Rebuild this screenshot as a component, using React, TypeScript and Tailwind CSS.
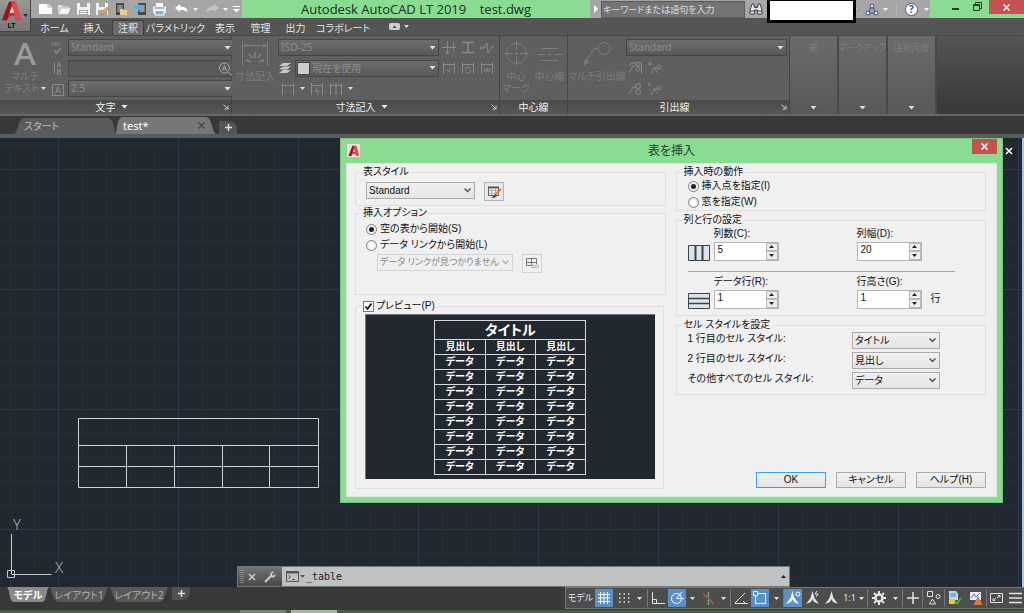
import clsx from "clsx";
import { useState, type ReactNode } from "react";

const uiFont = "font-['Noto_Sans','Noto_Sans_CJK_JP',sans-serif]";
const dialogFont = "font-['Liberation_Sans','Noto_Sans_CJK_JP',sans-serif]";

function Icon({
  w,
  h,
  children,
  className,
}: {
  w: number;
  h: number;
  children: ReactNode;
  className?: string;
}) {
  return (
    <svg
      width={w}
      height={h}
      viewBox={`0 0 ${w} ${h}`}
      fill="none"
      stroke="currentColor"
      aria-hidden="true"
      className={clsx("shrink-0", className)}
    >
      {children}
    </svg>
  );
}

function Caret({ className }: { className?: string }) {
  return (
    <Icon w={7} h={4} className={className}>
      <path d="M0.5 0h6L3.5 3.5z" fill="currentColor" stroke="none" />
    </Icon>
  );
}

function SmallCaret({ className }: { className?: string }) {
  return (
    <Icon w={5} h={3} className={className}>
      <path d="M0 0h5L2.5 3z" fill="currentColor" stroke="none" />
    </Icon>
  );
}

function LogoA({ size }: { size: number }) {
  return (
    <svg width={size} height={size} viewBox="0 0 24 24" aria-hidden="true">
      <path d="M1 22 9 1.500h7L22 22h-5.500l-1.500-5-6 1-2.500 4z" fill="#c8282c" />
      <path d="M16 1.500 22 22h-5.500L11 4z" fill="#e2494b" />
      <path d="M1 22 9 1.500 12 4 6.500 22z" fill="#9c1418" />
      <path d="m12 7 2.200 6.500-4.700 1z" fill="#f0e4e4" />
    </svg>
  );
}

/* ---------- Title bar ---------- */

const quickAccess: { label: string; icon: ReactNode }[] = [
  {
    label: "新規作成",
    icon: (
      <Icon w={15} h={14}>
        <path d="M1 2h9l4 3v7H1z" fill="#fff" stroke="none" />
        <path d="M10 2v3h4" stroke="#aaa" />
      </Icon>
    ),
  },
  {
    label: "開く",
    icon: (
      <Icon w={15} h={14}>
        <path d="M1 12V3h4l1 1.500h6V6H4z" fill="#ddd" stroke="none" />
        <path d="M1 12.500 4 6h10l-3 6.500z" fill="#f6f6f6" stroke="#999" strokeWidth=".5" />
      </Icon>
    ),
  },
  {
    label: "上書き保存",
    icon: (
      <Icon w={15} h={14}>
        <path d="M1 1h13v12H1z" fill="#f0f0f0" stroke="none" />
        <path d="M4 1h7v4H4zM3 8h9v5H3z" fill="#a8a8a8" stroke="none" />
        <path d="M4 9.500h7M4 11.500h7" stroke="#fff" />
      </Icon>
    ),
  },
  {
    label: "名前を付けて保存",
    icon: (
      <Icon w={15} h={14}>
        <path d="M1 1h12v12H1z" fill="#f0f0f0" stroke="none" />
        <path d="M4 1h6v4H4zM3 8h9v5H3z" fill="#a8a8a8" stroke="none" />
        <path d="m6 13 1-3 5-5 2 2-5 5z" fill="#f0a84a" stroke="#8a6a3a" strokeWidth=".5" />
      </Icon>
    ),
  },
  {
    label: "モバイルから開く",
    icon: (
      <Icon w={15} h={14}>
        <path d="M2 1h8v12H2z" fill="#4a4a4a" stroke="none" />
        <path d="M3.500 3h5v7h-5z" fill="#8a8a8a" stroke="none" />
        <path d="M6 13V7h3l1 1h3v5z" fill="#f3cf85" stroke="none" />
      </Icon>
    ),
  },
  {
    label: "モバイルに保存",
    icon: (
      <Icon w={15} h={14}>
        <path d="M5 1h8v12H5z" fill="#4a4a4a" stroke="none" />
        <path d="M6.500 3h5v7h-5z" fill="#9a9a9a" stroke="none" />
        <path d="M1 4h4V2l5 3.500L5 9V7H1z" fill="#5aa9e8" stroke="none" />
      </Icon>
    ),
  },
  {
    label: "印刷",
    icon: (
      <Icon w={15} h={14}>
        <path d="M4 1h7v4H4z" fill="#fff" stroke="none" />
        <path d="M1 4.500h13V11H1z" fill="#f0f0f0" stroke="none" />
        <path d="M3 6h9" stroke="#777" />
        <path d="M3 8.500h9V13H3z" fill="#7fb2de" stroke="#fff" />
      </Icon>
    ),
  },
];

function TitleBar() {
  return (
    <div className="flex h-[18px] bg-[#8bdc93]">
      <div className="flex w-[211px] shrink-0 items-center bg-[#a6a6a6] pl-[7px] text-white">
        <div className="flex items-center gap-1">
          {quickAccess.map((q) => (
            <button key={q.label} type="button" aria-label={q.label}>
              {q.icon}
            </button>
          ))}
        </div>
        <button type="button" aria-label="元に戻す" className="ml-2">
          <Icon w={14} h={10}>
            <path d="M0 4 5 0v2.500c5 0 7 2 8 6-2-2-4-2.500-8-2.500V8z" fill="#fff" stroke="none" />
          </Icon>
        </button>
        <SmallCaret className="ml-1" />
        <button type="button" aria-label="やり直し" className="ml-[7px]">
          <Icon w={14} h={10} className="text-[#c4c4c4]">
            <path d="M14 4 9 0v2.500c-5 0-7 2-8 6 2-2 4-2.500 8-2.500V8z" fill="currentColor" stroke="none" />
          </Icon>
        </button>
        <SmallCaret className="ml-1" />
        <button type="button" aria-label="クイック アクセスをカスタマイズ" className="ml-[5px]">
          <Icon w={7} h={8}>
            <path d="M0 1.500h7" stroke="#fff" />
            <path d="M0 4h7L3.500 7.500z" fill="#fff" stroke="none" />
          </Icon>
        </button>
      </div>

      <h1 className="grow text-center font-['Open_Sans',sans-serif] text-[13px] leading-[18px] whitespace-pre text-[#17301a]">
        {"Autodesk AutoCAD LT 2019    test.dwg"}
      </h1>

      <div className="flex w-[340px] shrink-0 items-center bg-[#a6a6a6] text-white">
        <button type="button" aria-label="検索を折りたたむ" className="flex w-[11px] justify-center">
          <Icon w={4} h={8}>
            <path d="M0 0 4 4 0 8z" fill="#fff" stroke="none" />
          </Icon>
        </button>
        <input
          type="text"
          aria-label="検索"
          placeholder="キーワードまたは語句を入力"
          className="h-[17px] w-[144px] border border-[#5a5a5a] bg-[#747474] px-px text-[9px] placeholder:text-[#dedede]"
        />
        <button type="button" aria-label="検索を実行" className="ml-1">
          <Icon w={14} h={14}>
            <path
              d="M3 2h2v3h4V2h2l2 6v4H8.500V8h-3v4H1V8z"
              fill="#e8e8ee"
              stroke="#3c4254"
            />
            <path d="M1 9h4.500M8.500 9H13M5.500 5.500h3" stroke="#3c4254" />
          </Icon>
        </button>
        <div className="relative ml-1 h-[18px] w-[89px] shrink-0">
          <div className="absolute inset-x-0 top-0 h-[23px] border-3 border-t-1 border-black bg-white" />
        </div>
        <SmallCaret className="-ml-1" />
        <button type="button" aria-label="Autodesk App Store" className="ml-2">
          <Icon w={14} h={13}>
            <path d="M7 3 3 10h8z" stroke="#3c4a86" />
            <g fill="#dfe4f6" stroke="#3c4a86">
              <circle cx="7" cy="3" r="2" />
              <circle cx="3" cy="10" r="2" />
              <circle cx="11" cy="10" r="2" />
            </g>
          </Icon>
        </button>
        <SmallCaret className="ml-1" />
        <span className="mx-2 h-3 w-px bg-[#b8b8b8]" />
        <button
          type="button"
          aria-label="ヘルプ"
          className="flex size-[13px] items-center justify-center rounded-full border border-[#55596a] bg-white text-[10px] font-bold text-[#2458b0]"
        >
          ?
        </button>
        <SmallCaret className="ml-[6px]" />
      </div>

      <div className="flex w-[94px] shrink-0 items-start justify-end text-[#1d3a20]">
        <button type="button" aria-label="最小化" className="mt-[8px] mr-[14px] h-[2px] w-[7px] bg-[#1d3a20]" />
        <button type="button" aria-label="元に戻す (縮小)" className="mt-[2px] mr-[7px]">
          <Icon w={9} h={9}>
            <path d="M2.500 2.500v-2h6v6h-2" />
            <path d="M.5 2.500h6v6h-6zM.5 3.500h6" />
          </Icon>
        </button>
        <CloseButton className="h-[14px] w-[35px]" />
      </div>
    </div>
  );
}

function CloseButton({ className }: { className?: string }) {
  return (
    <button
      type="button"
      aria-label="閉じる"
      className={clsx("flex items-center justify-center bg-[#c75050] text-white", className)}
    >
      <Icon w={7} h={7}>
        <path d="m.5.5 6 6m0-6-6 6" strokeWidth="1.500" />
      </Icon>
    </button>
  );
}

/* ---------- Ribbon ---------- */

const ribbonTabs = [
  { label: "ホーム", width: "w-[41px]" },
  { label: "挿入", width: "w-[37px]" },
  { label: "注釈", width: "w-[32px]", active: true },
  { label: "パラメトリック", width: "w-[63px]" },
  { label: "表示", width: "w-[36px]" },
  { label: "管理", width: "w-[35px]" },
  { label: "出力", width: "w-[35px]" },
  { label: "コラボレート", width: "w-[60px]" },
];

function RibbonTabs() {
  return (
    <nav className="flex h-[17px] items-end bg-[#555] pl-[3px]">
      {ribbonTabs.map((t) => (
        <button
          key={t.label}
          type="button"
          className={clsx(
            "h-[15px] shrink-0 border border-b-0 text-[10px] leading-[13px] whitespace-nowrap text-[#e4e4e4]",
            t.width,
            t.active ? "border-[#3f3f3f] bg-[#6b6b6b]" : "border-transparent",
          )}
        >
          {t.label}
        </button>
      ))}
      <button type="button" aria-label="リボンを最小化" className="ml-4 flex items-center gap-1 self-center text-[#ddd]">
        <Icon w={11} h={7}>
          <rect width="11" height="7" rx="2" fill="#d0d0d0" stroke="none" />
          <path d="M3.500 5h4l-2-2.500z" fill="#444" stroke="none" />
        </Icon>
        <SmallCaret />
      </button>
    </nav>
  );
}

function RibbonSelect({
  label,
  value,
  swatch,
}: {
  label: string;
  value: string;
  swatch?: boolean;
}) {
  return (
    <div className="flex h-[17px] min-w-0 grow items-center border border-[#474747] bg-linear-to-b from-[#6d6d6d] to-[#595959] pr-[2px]">
      {swatch && <span className="ml-px size-[13px] shrink-0 border border-[#444] bg-[#ccc]" />}
      <select
        aria-label={label}
        className="h-full min-w-0 grow appearance-none bg-transparent px-[2px] text-[10px] text-[#8c8c8c] outline-none"
      >
        <option>{value}</option>
      </select>
      <Caret className="text-[#e2e2e2]" />
    </div>
  );
}

function Panel({
  title,
  width,
  caret,
  launcher,
  children,
}: {
  title: string;
  width: string;
  caret?: boolean;
  launcher?: boolean;
  children: ReactNode;
}) {
  return (
    <section className={clsx("flex shrink-0 flex-col border-r border-[#454545]", width)}>
      <div className="flex grow bg-[#5f5f5f] text-[#8a8a8a]">{children}</div>
      <div className="flex h-[14px] items-center justify-center bg-linear-to-b from-[#4a4a4a] to-[#575757] text-[#f0f0f0]">
        <h2 className="flex grow items-center justify-center gap-[5px] text-[10px] leading-[14px]">
          {title}
          {caret && <Caret />}
        </h2>
        {launcher && (
          <Icon w={6} h={6} className="mr-[2px] text-[#ccc]">
            <path d="M.5.5 4 4M5 1.500V5H1.500" />
          </Icon>
        )}
      </div>
    </section>
  );
}

function BigButton({
  icon,
  lines,
  width,
  menu,
}: {
  icon: ReactNode;
  lines: string[];
  width: string;
  menu?: boolean;
}) {
  return (
    <button
      type="button"
      className={clsx("flex shrink-0 flex-col items-center pt-1 text-[10px] leading-[12px] whitespace-nowrap text-[#7d7d7d]", width)}
    >
      <span className="mb-[3px] flex h-[27px] items-center">{icon}</span>
      {lines.map((l, i) => (
        <span key={l} className="flex items-center gap-[2px]">
          {l}
          {menu && i === lines.length - 1 && <SmallCaret className="text-[#ddd]" />}
        </span>
      ))}
    </button>
  );
}

function DimIcon({ children }: { children?: ReactNode }) {
  return (
    <Icon w={14} h={13}>
      <path d="M1.500 1v12M12.500 1v12M1.500 3.500h11" />
      {children}
    </Icon>
  );
}

const leaderMini = "M1 12l4-7h3";

function Ribbon() {
  return (
    <div className="flex h-[79px] border-t border-[#484848] bg-linear-to-b from-[#555] to-[#383838]">
      <Panel title="文字" width="w-[232px]" caret launcher>
        <BigButton
          width="w-[50px]"
          lines={["マルチ", "テキスト"]}
          menu
          icon={
            <Icon w={22} h={24}>
              <path
                d="M0 23 9 1h4l9 22h-4l-2.500-6h-9L4 23zM7.500 14h7L11 5z"
                fill="#999"
                stroke="none"
              />
            </Icon>
          }
        />
        <div className="flex grow flex-col justify-between py-[3px] pr-[2px]">
          <div className="flex items-center gap-1">
            <Icon w={14} h={14}>
              <text x="1" y="5" fontSize="5" fill="currentColor" stroke="none">ABC</text>
              <path d="m4 9 2.500 3L11 7" strokeWidth="1.500" />
            </Icon>
            <RibbonSelect label="文字スタイル" value="Standard" />
          </div>
          <div className="flex items-center gap-1">
            <Icon w={14} h={14}>
              <path d="M4.500 1v12M7 6.500l2-5 2 5M8 5h2" />
              <path d="M7.500 8.500h2.500v2H7.500zM7.500 10.500h3v2.500h-3z" />
            </Icon>
            <div className="flex h-[17px] min-w-0 grow items-center border border-[#474747] bg-[#5a5a5a]">
              <input type="text" aria-label="文字列を検索" className="min-w-0 grow bg-transparent text-[10px]" />
              <Icon w={16} h={15} className="text-[#aaa]">
                <circle cx="7.500" cy="7" r="5" />
                <path d="m11 11 4 3.500M5.500 9.500l2-5 2 5M6 8h3" />
              </Icon>
            </div>
          </div>
          <div className="flex items-center gap-1">
            <Icon w={14} h={14}>
              <path d="M2.500 2.500h11v11h-11z" />
              <path d="m5.500 11.500 2.500-7 2.500 7M6.500 9.500h3" />
            </Icon>
            <RibbonSelect label="文字の高さ" value="2.5" />
          </div>
        </div>
      </Panel>

      <Panel title="寸法記入" width="w-[268px]" caret launcher>
        <BigButton
          width="w-[46px]"
          lines={["寸法記入"]}
          icon={
            <Icon w={28} h={27}>
              <path d="M1.500 1v25M26.500 1v25M2 5.500h24" />
              <path d="m2 5.500 4-2v4zM26 5.500l-4-2v4z" fill="currentColor" stroke="none" />
              <path d="M14 12v6M8 14l3 4M20 14l-3 4M5 20l5 2M23 20l-5 2" strokeWidth="2" />
            </Icon>
          }
        />
        <div className="flex grow flex-col justify-between py-[3px]">
          <div className="flex">
            <RibbonSelect label="寸法スタイル" value="ISO-25" />
          </div>
          <div className="flex items-center gap-[3px]">
            <Icon w={14} h={13} className="text-[#c8c8c8]">
              <path
                d="M5 1h8l-4 3H1zM5 4.500h8l-4 3H1zM5 8h8l-4 3H1z"
                fill="currentColor"
                stroke="none"
              />
            </Icon>
            <RibbonSelect label="寸法画層" value="現在を使用" swatch />
          </div>
          <div className="flex h-[17px] items-center gap-[5px] pl-[3px]">
            <DimIcon />
            <SmallCaret className="text-[#ddd]" />
            <DimIcon>
              <path d="m8 5-3 4h4l-2 4" />
            </DimIcon>
            <DimIcon>
              <path d="M7 1v12" />
            </DimIcon>
            <SmallCaret className="text-[#ddd]" />
          </div>
        </div>
        <div className="grid w-[60px] shrink-0 grid-cols-3 content-start gap-y-[7px] pt-[5px] pl-[3px]">
          <Icon w={14} h={13}>
            <path d="M0 6.500h14M5.500 0v13M11.500 2v9M3 10l2.500 3L8 10" />
          </Icon>
          <Icon w={14} h={13}>
            <path d="M1 1.500h12M1 11.500h12M4 1.500h6M7 2v9" strokeWidth="1.500" />
          </Icon>
          <Icon w={14} h={13}>
            <path d="M1 7h3l3-5 1 10 4-6h2M1 5v4" />
          </Icon>
          <DimIcon>
            <path d="m4.500 8 2 2.500 3-4" />
          </DimIcon>
          <DimIcon>
            <path d="M4.500 9a2.500 2.500 0 0 1 5-1M9.500 9a2.500 2.500 0 0 1-5 1.500" />
          </DimIcon>
          <DimIcon>
            <circle cx="5.500" cy="9" r="1.500" />
            <circle cx="8.500" cy="9" r="1.500" />
          </DimIcon>
        </div>
      </Panel>

      <Panel title="中心線" width="w-[68px]">
        <BigButton
          width="w-[32px]"
          lines={["中心", "マーク"]}
          icon={
            <Icon w={25} h={25}>
              <circle cx="12.500" cy="12.500" r="10" />
              <path d="M12.500 0v9M12.500 16v9M0 12.500h9M16 12.500h9M12.500 11v3M11 12.500h3" />
            </Icon>
          }
        />
        <BigButton
          width="w-[35px]"
          lines={["中心線"]}
          icon={
            <Icon w={26} h={16}>
              <path d="M4 2.500h17M0 8.500h8M11 8.500h4M18 8.500h8M4 14.500h17" />
            </Icon>
          }
        />
      </Panel>

      <Panel title="引出線" width="w-[222px]" launcher>
        <BigButton
          width="w-[58px]"
          lines={["マルチ引出線"]}
          icon={
            <Icon w={28} h={26}>
              <circle cx="21" cy="7.500" r="6" />
              <path d="M15 7.500h-4L3 21" />
              <path d="m1 25 1-7 4 3z" fill="currentColor" stroke="none" />
            </Icon>
          }
        />
        <div className="flex grow flex-col justify-between py-[3px] pr-[2px]">
          <div className="flex">
            <RibbonSelect label="引出線スタイル" value="Standard" />
          </div>
          <div className="flex h-[17px] items-center gap-[6px] pl-[2px]">
            <Icon w={14} h={14}>
              <path d={leaderMini} />
              <path d="M1 5l3-3h4M13.500 1v12" />
              <circle cx="10" cy="3" r="2" />
              <circle cx="10" cy="8" r="2" />
            </Icon>
            <Icon w={14} h={14}>
              <path d="M0 3h4M2 1v4M3 13l3-6h4M6 7l4 5" />
              <circle cx="11" cy="6" r="2" />
            </Icon>
          </div>
          <div className="flex h-[17px] items-center gap-[6px] pl-[2px]">
            <Icon w={14} h={14}>
              <path d={leaderMini} />
              <circle cx="10" cy="4" r="2.500" />
              <circle cx="10" cy="10" r="2.500" />
            </Icon>
            <Icon w={14} h={14}>
              <path d="m0 1 3 3m0-3L0 4M3 13l3-6h4M6 7l4 5" />
              <circle cx="11" cy="6" r="2" />
            </Icon>
          </div>
        </div>
      </Panel>

      {["表", "マークアップ", "注釈尺度"].map((label) => (
        <button
          key={label}
          type="button"
          className="flex w-[49px] shrink-0 flex-col items-center justify-between overflow-hidden border-r-2 border-[#484848] bg-linear-to-b from-[#6b6b6b] to-[#585858] pt-[5px] pb-[4px] text-[9px] leading-[14px] whitespace-nowrap text-[#7e7e7e]"
        >
          {label}
          <Caret className="text-[#ddd]" />
        </button>
      ))}
    </div>
  );
}

/* ---------- File tabs ---------- */

function FileTabs() {
  return (
    <div className="flex h-[24px] items-end border-t-2 border-b-4 border-t-[#666] border-b-[#5b5b5b] bg-[#383838] pl-[14px] text-[10px]">
      <button type="button" className="relative h-[16px] w-[101px] pl-[10px] text-left leading-[16px] text-[#bdbdbd]">
        <svg className="absolute inset-0 size-full" viewBox="0 0 101 16" preserveAspectRatio="none" aria-hidden="true">
          <path d="M0 16C5 14 3 0 11 0h82c6 0 6 4 8 16z" fill="#5b5b5b" />
        </svg>
        <span className="relative">スタート</span>
      </button>
      <div className="relative flex h-[17px] w-[101px] items-center pr-[11px] pl-[8px] text-white">
        <svg className="absolute inset-0 size-full" viewBox="0 0 101 17" preserveAspectRatio="none" aria-hidden="true">
          <path d="M0 17C3 14 1 0 8 0h82c8 0 6 14 11 17z" fill="#777" />
        </svg>
        <button type="button" className="relative grow text-left text-[11px] leading-[16px]">
          test*
        </button>
        <button type="button" aria-label="test を閉じる" className="relative text-[#4a4a4a]">
          <Icon w={7} h={7}>
            <path d="m.5.5 6 6m0-6-6 6" strokeWidth="1.500" />
          </Icon>
        </button>
      </div>
      <button
        type="button"
        aria-label="新しい図面"
        className="ml-[3px] flex h-[13px] w-[18px] items-center justify-center rounded-tr-lg bg-[#545454] text-[#ddd]"
      >
        <Icon w={7} h={7}>
          <path d="M3.500 0v7M0 3.500h7" strokeWidth="1.500" />
        </Icon>
      </button>
    </div>
  );
}

/* ---------- Drawing area ---------- */

function Drawing() {
  return (
    <svg className="absolute inset-0 size-full" aria-label="図面">
      <defs>
        <pattern id="minor" x="10" y="7" width="24" height="24" patternUnits="userSpaceOnUse">
          <path d="M.5 0v24M0 .5h24" stroke="#262e38" fill="none" />
        </pattern>
        <pattern id="major" x="58" y="31" width="120" height="120" patternUnits="userSpaceOnUse">
          <path d="M.5 0v120M0 .5h120" stroke="#2e3746" fill="none" />
        </pattern>
      </defs>
      <rect width="100%" height="100%" fill="url(#minor)" />
      <rect width="100%" height="100%" fill="url(#major)" />
      <path
        d="M78.500 280.500h240v69h-240zM78.500 307.500h240M78.500 328.500h240M126.500 307v43M174.500 307v43M222.500 307v43M269.500 307v43"
        stroke="#d0d2d4"
        fill="none"
      />
      {/* UCS icon */}
      <path d="M7.500 432.500h7v7h-7zM11.500 436.500h40M11.500 436v-40" stroke="#c6c9cc" fill="none" />
      <g fill="#b9bdc2" className="font-['Open_Sans',sans-serif] font-light" fontSize="15">
        <text x="13" y="392">Y</text>
        <text x="55" y="435">X</text>
      </g>
    </svg>
  );
}

function CommandLine() {
  return (
    <div className="absolute right-[232px] bottom-0 left-[237px] flex h-[21px] border border-[#777] bg-[#c0c1c3]">
      <div className="flex w-[44px] shrink-0 items-center gap-2 bg-linear-to-b from-[#757575] to-[#484848] pl-[2px] text-[#ccc]">
        <Icon w={4} h={14} className="text-[#aaa]">
          <path d="M1 0v14M3 0v14" strokeDasharray="1 1" />
        </Icon>
        <button type="button" aria-label="コマンド ラインを閉じる" className="-ml-1">
          <Icon w={8} h={8}>
            <path d="m1 1 6 6m0-6-6 6" strokeWidth="1.500" />
          </Icon>
        </button>
        <button type="button" aria-label="カスタマイズ">
          <Icon w={12} h={12}>
            <path d="m1 11 6-6" strokeWidth="2" />
            <path d="M10 1 8 3v1.500h1.500L11.500 3c.5 2-1 4-3 3.500S5.500 3 7 1.500 9 .5 10 1" fill="currentColor" stroke="none" />
          </Icon>
        </button>
      </div>
      <div className="flex grow items-center pr-[3px] pl-1 text-[#555]">
        <Icon w={13} h={11}>
          <path d="M.5.5h12v10H.5z" />
          <path d="M0 1.500h13" strokeWidth="2" />
          <path d="m2.500 4.500 2 1.500-2 1.500M6 8.500h3" />
        </Icon>
        <SmallCaret className="mx-px" />
        <input
          type="text"
          aria-label="コマンド"
          defaultValue="_table"
          className="min-w-0 grow bg-transparent font-['DejaVu_Sans_Mono',monospace] text-[10px] text-[#222] outline-none"
        />
        <Icon w={5} h={3} className="text-[#222]">
          <path d="M0 3h5L2.500 0z" fill="currentColor" stroke="none" />
        </Icon>
      </div>
    </div>
  );
}

/* ---------- Insert table dialog ---------- */

function Group({
  legend,
  className,
  children,
}: {
  legend: ReactNode;
  className?: string;
  children: ReactNode;
}) {
  return (
    <fieldset className={clsx("min-w-0 border border-[#dfdfdf]", className)}>
      <legend className="ml-[5px] px-[2px] leading-[14px]">{legend}</legend>
      {children}
    </fieldset>
  );
}

function Dropdown({
  label,
  id,
  options,
  width,
  disabled,
}: {
  label?: string;
  id?: string;
  options: string[];
  width: string;
  disabled?: boolean;
}) {
  return (
    <div
      className={clsx(
        "flex h-[17px] shrink-0 items-center border pr-[3px]",
        width,
        disabled
          ? "border-[#d4d4d4] bg-[#efefef] text-[9px] text-[#868686]"
          : "border-[#acacac] bg-linear-to-b from-[#f0f0f0] to-[#e5e5e5] text-[#111]",
      )}
    >
      <select
        id={id}
        aria-label={label}
        disabled={disabled}
        className="h-full min-w-0 grow appearance-none bg-transparent pl-[2px] outline-none"
      >
        {options.map((o) => (
          <option key={o}>{o}</option>
        ))}
      </select>
      <Icon w={7} h={5} className={disabled ? "text-[#b5b5b5]" : "text-[#555]"}>
        <path d="m.5.5 3 3 3-3" strokeWidth="1.500" />
      </Icon>
    </div>
  );
}

function Radio({
  name,
  label,
  checked,
  onChange,
}: {
  name: string;
  label: string;
  checked: boolean;
  onChange: () => void;
}) {
  return (
    <label className="flex w-fit items-center gap-[3px] leading-[14px]">
      <input
        type="radio"
        name={name}
        checked={checked}
        onChange={onChange}
        className="size-[11px] appearance-none rounded-full border border-[#808080] bg-white bg-clip-content p-[2px] checked:bg-[#222]"
      />
      {label}
    </label>
  );
}

function Spinner({ id, initial }: { id: string; initial: number }) {
  const [value, setValue] = useState(String(initial));
  const step = (delta: number) => setValue((v) => String(Math.max(1, (Number(v) || 0) + delta)));

  return (
    <div className="flex h-[19px] w-[65px] border border-[#b4b4b4] bg-white">
      <input
        id={id}
        type="text"
        value={value}
        onChange={(e) => setValue(e.target.value)}
        className="h-[14px] min-w-0 grow bg-transparent pl-[3px] outline-none"
      />
      <div className="flex w-[12px] shrink-0 flex-col">
        <button
          type="button"
          aria-label="増やす"
          onClick={() => step(1)}
          className="flex grow items-center justify-center border border-[#b8b8b8] bg-[#eee]"
        >
          <Icon w={5} h={3}>
            <path d="M0 3h5L2.500 0z" fill="#222" stroke="none" />
          </Icon>
        </button>
        <button
          type="button"
          aria-label="減らす"
          onClick={() => step(-1)}
          className="flex grow items-center justify-center border border-[#b8b8b8] bg-[#eee]"
        >
          <SmallCaret className="text-[#222]" />
        </button>
      </div>
    </div>
  );
}

function PreviewTable() {
  return (
    <table className="w-[152px] border-collapse text-[10px] leading-[14px] font-bold text-white">
      <thead>
        <tr>
          <th colSpan={3} className="h-[19px] border border-[#d8d8d8] p-0 text-[14px] leading-[18px]">
            タイトル
          </th>
        </tr>
        <tr>
          {[0, 1, 2].map((c) => (
            <th key={c} className="h-[15px] w-1/3 border border-[#d8d8d8] p-0">
              見出し
            </th>
          ))}
        </tr>
      </thead>
      <tbody>
        {Array.from({ length: 8 }, (_, r) => (
          <tr key={r}>
            {[0, 1, 2].map((c) => (
              <td key={c} className="h-[15px] border border-[#d8d8d8] p-0 text-center">
                データ
              </td>
            ))}
          </tr>
        ))}
      </tbody>
    </table>
  );
}

const cellStyles = [
  { id: "style-first", label: "1 行目のセル スタイル:", value: "タイトル" },
  { id: "style-second", label: "2 行目のセル スタイル:", value: "見出し" },
  { id: "style-rest", label: "その他すべてのセル スタイル:", value: "データ" },
];

function InsertTableDialog() {
  const [source, setSource] = useState("empty");
  const [placement, setPlacement] = useState("point");
  const [preview, setPreview] = useState(true);

  return (
    <div
      role="dialog"
      aria-labelledby="dialog-title"
      className="absolute top-0 right-[19px] left-[340px] border border-[#76c47e] bg-[#8bdc93] px-[5px] pb-[5px]"
    >
      <div className="flex h-[24px] items-start">
        <span className="mt-[5px] ml-px flex size-[13px] items-center justify-center bg-[#f5dede]">
          <LogoA size={12} />
        </span>
        <h2 id="dialog-title" className="grow pl-[11px] text-center text-[12px] leading-[24px] text-[#26402a]">
          表を挿入
        </h2>
        <CloseButton className="h-[15px] w-[25px]" />
      </div>

      <div
        className={clsx(
          "flex gap-[10px] border border-[#d9ead9] bg-[#f0f0f0] pt-px pr-[10px] pb-[7px] pl-[8px] text-[10px] text-[#111]",
          dialogFont,
        )}
      >
        <div className="flex min-w-0 flex-1 flex-col">
          <Group legend="表スタイル" className="pb-1">
            <div className="flex items-start gap-[9px] pt-[3px] pl-[10px]">
              <Dropdown label="表スタイル" options={["Standard"]} width="w-[109px]" />
              <button
                type="button"
                aria-label="表スタイル管理を起動"
                className="flex h-[19px] w-[20px] items-center justify-center border border-[#b4b4b4] bg-[#e8e8e8]"
              >
                <Icon w={15} h={14}>
                  <path d="M1.500 2.500h10v8h-10z" fill="#fff" stroke="#555" />
                  <path d="M1 2.500h11" stroke="#555" strokeWidth="2" />
                  <path d="M1.500 5.500h10M1.500 8.500h10M4.500 3v7M8.500 3v7" stroke="#aaa" />
                  <path d="M14 4 9 9" stroke="#d88a3a" strokeWidth="2" />
                  <path d="M4 13c2 0 2-4 5-4 2 2 0 4-5 4" fill="#7a3f1a" stroke="none" />
                </Icon>
              </button>
            </div>
          </Group>

          <Group legend="挿入オプション" className="pb-[21px]">
            <div className="flex flex-col gap-[2px] pt-[2px] pl-[10px]">
              <Radio
                name="source"
                label="空の表から開始(S)"
                checked={source === "empty"}
                onChange={() => setSource("empty")}
              />
              <Radio
                name="source"
                label="データ リンクから開始(L)"
                checked={source === "link"}
                onChange={() => setSource("link")}
              />
              <div className="flex items-start gap-[9px] pl-[11px]">
                <Dropdown
                  label="データ リンク"
                  options={["データ リンクが見つかりません"]}
                  width="w-[136px]"
                  disabled
                />
                <button
                  type="button"
                  aria-label="データ リンク管理を起動"
                  disabled
                  className="flex h-[19px] w-[20px] items-center justify-center border border-[#d4d4d4] text-[#777]"
                >
                  <Icon w={13} h={11}>
                    <path d="M5 7.500H.5v-7h10V6M.5 4.500h10M5.500.5v7" />
                    <circle cx="7" cy="8.500" r="1.500" stroke="#aaa" />
                    <circle cx="11" cy="8.500" r="1.500" stroke="#aaa" />
                  </Icon>
                </button>
              </div>
            </div>
          </Group>

          <Group
            className="mt-[4px] mr-[2px] pb-[9px]"
            legend={
              <label className="flex items-center gap-[2px]">
                <span className="relative flex size-[11px]">
                  <input
                    type="checkbox"
                    checked={preview}
                    onChange={(e) => setPreview(e.target.checked)}
                    className="peer size-[11px] appearance-none border border-[#777] bg-white"
                  />
                  <Icon w={11} h={11} className="pointer-events-none absolute inset-0 hidden text-black peer-checked:block">
                    <path d="m2.500 5.500 2 2.500 4-5.500" strokeWidth="1.500" />
                  </Icon>
                </span>
                プレビュー(P)
              </label>
            }
          >
            <div className="mt-px mr-[8px] ml-[9px] flex h-[165px] items-center justify-center border-t border-l border-[#777] bg-[#212830]">
              {preview && <PreviewTable />}
            </div>
          </Group>
        </div>

        <div className="flex min-w-0 flex-1 flex-col gap-[2px]">
          <Group legend="挿入時の動作" className="pb-px">
            <div className="flex flex-col gap-[2px] pl-[11px]">
              <Radio
                name="placement"
                label="挿入点を指定(I)"
                checked={placement === "point"}
                onChange={() => setPlacement("point")}
              />
              <Radio
                name="placement"
                label="窓を指定(W)"
                checked={placement === "window"}
                onChange={() => setPlacement("window")}
              />
            </div>
          </Group>

          <Group legend="列と行の設定" className="pb-[6px]">
            <div className="grid grid-cols-[22px_139px_65px_auto] items-center justify-start gap-x-[4px] pl-[11px] leading-[14px]">
              <label htmlFor="columns" className="col-start-2">
                列数(C):
              </label>
              <label htmlFor="column-width" className="whitespace-nowrap">
                列幅(D):
              </label>
              <Icon w={22} h={16} className="col-start-1 mt-1">
                <path d="M.5.500h21v15H.5z" fill="#dde3ea" stroke="#39434f" />
                <path d="M7.500 0v16M14.500 0v16" stroke="#39434f" strokeWidth="2" />
              </Icon>
              <Spinner id="columns" initial={5} />
              <Spinner id="column-width" initial={20} />
            </div>
            <hr className="mt-[10px] mr-[30px] mb-[3px] ml-[11px] border-t border-[#a5a5a5]" />
            <div className="grid grid-cols-[22px_139px_65px_auto] items-center justify-start gap-x-[4px] pl-[11px] leading-[14px]">
              <label htmlFor="rows" className="col-start-2">
                データ行(R):
              </label>
              <label htmlFor="row-height" className="whitespace-nowrap">
                行高さ(G):
              </label>
              <Icon w={22} h={16} className="col-start-1 mt-1">
                <path d="M.5.500h21v15H.5z" fill="#dde3ea" stroke="#39434f" />
                <path d="M0 5.500h22M0 10.500h22" stroke="#39434f" strokeWidth="1.500" />
              </Icon>
              <Spinner id="rows" initial={1} />
              <Spinner id="row-height" initial={1} />
              <span className="pl-[5px]">行</span>
            </div>
          </Group>

          <Group legend="セル スタイルを設定" className="pb-[5px]">
            <div className="flex flex-col gap-[3px] pr-[45px] pl-[11px]">
              {cellStyles.map((s) => (
                <div key={s.id} className="flex items-start justify-between">
                  <label htmlFor={s.id} className="leading-[14px]">
                    {s.label}
                  </label>
                  <Dropdown id={s.id} options={[s.value]} width="w-[88px]" />
                </div>
              ))}
            </div>
          </Group>

          <div className="mt-auto mb-px flex justify-end gap-[10px]">
            {["OK", "キャンセル", "ヘルプ(H)"].map((label, i) => (
              <button
                key={label}
                type="button"
                className={clsx(
                  "h-[16px] w-[70px] border bg-linear-to-b from-[#f0f0f0] to-[#e5e5e5] leading-[14px]",
                  i === 0 ? "border-[#3f9bf5]" : "border-[#acacac]",
                )}
              >
                {label}
              </button>
            ))}
          </div>
        </div>
      </div>
    </div>
  );
}

/* ---------- Status bar ---------- */

const layoutTabs = [
  { label: "モデル", width: "w-[42px]", active: true },
  { label: "レイアウト1", width: "w-[60px]" },
  { label: "レイアウト2", width: "w-[60px]" },
];

type StatusItem = {
  label: string;
  width: string;
  icon?: ReactNode;
  text?: string;
  on?: boolean;
  menu?: boolean;
  end?: boolean;
};

const annotation = "M7.500 0 9.500 7l4.500 6-5-2-1.500-3L6 11l-5 2 4.500-6z";

const statusItems: StatusItem[] = [
  { label: "モデル空間", width: "w-[29px]", text: "モデル" },
  {
    label: "グリッド",
    width: "w-[18px]",
    on: true,
    icon: (
      <Icon w={14} h={14}>
        <path d="M3.500 1v12M7 1v12M10.500 1v12M1 3.500h12M1 7h12M1 10.500h12" />
      </Icon>
    ),
  },
  {
    label: "スナップ",
    width: "w-[35px]",
    menu: true,
    end: true,
    icon: (
      <Icon w={12} h={12}>
        <path d="M1 2h12M1 6h12M1 10h12" strokeWidth="1.500" strokeDasharray="1.500 3" />
      </Icon>
    ),
  },
  {
    label: "直交モード",
    width: "w-[20px]",
    icon: (
      <Icon w={14} h={14}>
        <path d="M1.500 1v11.500H14M1.500 8.500h4v4" />
      </Icon>
    ),
  },
  {
    label: "極トラッキング",
    width: "w-[18px]",
    on: true,
    icon: (
      <Icon w={14} h={14}>
        <circle cx="6.500" cy="7.500" r="5" />
        <path d="M6.500 7.500H14M6.500 7.500 12 1" />
      </Icon>
    ),
  },
  { label: "極トラッキング設定", width: "w-[12px]", menu: true },
  {
    label: "アイソメ",
    width: "w-[33px]",
    menu: true,
    end: true,
    icon: (
      <Icon w={13} h={13}>
        <path d="m1 1 11 11" stroke="#b45a5a" strokeWidth="1.500" />
        <path d="M6.500 0v5M6.500 8v5" stroke="#5cb46a" strokeWidth="1.500" />
      </Icon>
    ),
  },
  {
    label: "オブジェクト スナップ トラッキング",
    width: "w-[20px]",
    icon: (
      <Icon w={14} h={12}>
        <path d="M1 11.500h13M1 11 11 1M9 9l2 2" />
      </Icon>
    ),
  },
  {
    label: "オブジェクト スナップ",
    width: "w-[18px]",
    on: true,
    icon: (
      <Icon w={14} h={14}>
        <path d="M3 2.500h9.500v10h-10V4" />
        <path d="M.5.5h4v4h-4z" fill="#5b8fc7" />
      </Icon>
    ),
  },
  { label: "オブジェクト スナップ設定", width: "w-[15px]", menu: true, end: true },
  {
    label: "注釈オブジェクトを表示",
    width: "w-[18px]",
    on: true,
    icon: (
      <Icon w={17} h={14}>
        <path d={annotation} fill="currentColor" stroke="none" />
        <circle cx="13" cy="3" r="2" />
      </Icon>
    ),
  },
  {
    label: "尺度を自動追加",
    width: "w-[20px]",
    icon: (
      <Icon w={15} h={14}>
        <path d={annotation} fill="currentColor" stroke="none" />
        <path d="m12 0-2 3h3l-2 3" />
      </Icon>
    ),
  },
  {
    label: "注釈の自動",
    width: "w-[18px]",
    icon: (
      <Icon w={15} h={14}>
        <path d={annotation} fill="currentColor" stroke="none" />
      </Icon>
    ),
  },
  { label: "注釈尺度", width: "w-[28px]", text: "1:1", menu: true, end: true },
  {
    label: "ワークスペース",
    width: "w-[35px]",
    menu: true,
    end: true,
    icon: (
      <Icon w={14} h={14}>
        <circle cx="7" cy="7" r="3.500" strokeWidth="2.500" />
        <path d="M7 0v3M7 11v3M0 7h3M11 7h3M2 2l2 2M10 10l2 2M12 2l-2 2M4 10l-2 2" strokeWidth="2" />
      </Icon>
    ),
  },
  {
    label: "注釈モニター",
    width: "w-[20px]",
    end: true,
    icon: (
      <Icon w={14} h={14}>
        <path d="M7 1v12M1 7h12" strokeWidth="1.500" />
      </Icon>
    ),
  },
  {
    label: "選択表示",
    width: "w-[22px]",
    end: true,
    icon: (
      <Icon w={15} h={14}>
        <path d="M1.500.5h5v5h-5zM6.500 8l3 5h-6z" />
        <circle cx="12" cy="5.500" r="2" />
      </Icon>
    ),
  },
  {
    label: "図面の共有",
    width: "w-[20px]",
    icon: (
      <Icon w={14} h={14}>
        <path d="M1 0h7l2 3v6H1z" fill="#bcd8ee" stroke="none" />
        <path d="M2 3h6M2 5h6" stroke="#4a88c0" />
        <path d="M1 8h6v5H1z" fill="#e9c83a" stroke="none" />
        <path d="m7 10 2 2.500L13 7" stroke="#3fae49" strokeWidth="2" />
      </Icon>
    ),
  },
  {
    label: "グラフィックス",
    width: "w-[22px]",
    end: true,
    icon: (
      <Icon w={14} h={14}>
        <path d="M1 1h11v8H1z" fill="#e8eef4" stroke="none" />
        <path d="m2 7 3-4 2 3 4-4" stroke="#3b78b8" />
        <path d="m9 5 4.500 9h-9z" fill="#e8763a" stroke="none" />
      </Icon>
    ),
  },
  {
    label: "フルスクリーン",
    width: "w-[19px]",
    icon: (
      <Icon w={13} h={12}>
        <path d="M.5 1.500h12v9H.5zM7 6l3-2.500M8 3.500h2v2M6 6 3 8.500M3 6.500v2h2" />
      </Icon>
    ),
  },
  {
    label: "カスタマイズ",
    width: "w-[18px]",
    icon: (
      <Icon w={14} h={12}>
        <path d="M1 1.500h13M1 6h13M1 10.500h13" strokeWidth="1.500" />
      </Icon>
    ),
  },
];

function StatusBar() {
  return (
    <div className="flex h-[23px] items-start bg-[#383838] pl-[7px]">
      <nav className="flex text-[10px]">
        {layoutTabs.map((t) => (
          <button
            key={t.label}
            type="button"
            className={clsx(
              "relative h-[15px] shrink-0 leading-[14px] whitespace-nowrap",
              t.width,
              t.active ? "font-bold text-white" : "text-[#b0b0b0]",
            )}
          >
            <svg className="absolute inset-0 size-full" viewBox="0 0 60 15" preserveAspectRatio="none" aria-hidden="true">
              <path d="M0 0c4 2 3 15 10 15h40c7 0 6-13 10-15z" fill={t.active ? "#8a8a8a" : "#585858"} />
            </svg>
            <span className="relative">{t.label}</span>
          </button>
        ))}
        <button
          type="button"
          aria-label="新しいレイアウト"
          className="ml-[3px] flex h-[13px] w-[18px] items-center justify-center rounded-br-lg bg-[#505050] text-[#ddd]"
        >
          <Icon w={7} h={7}>
            <path d="M3.500 0v7M0 3.500h7" strokeWidth="1.500" />
          </Icon>
        </button>
      </nav>

      <div className="ml-auto flex h-[22px] items-center border border-r-0 border-[#777] bg-[#4d4d4d] text-[#e4e4e4]">
        {statusItems.map((s) => (
          <button
            key={s.label}
            type="button"
            aria-label={s.text ? undefined : s.label}
            aria-pressed={s.on}
            className={clsx(
              "flex h-[18px] shrink-0 items-center justify-center gap-[3px] text-[9px] whitespace-nowrap",
              s.width,
              s.on && "bg-[#5b8fc7] text-white",
              s.end && "border-r border-[#777]",
              s.icon && s.menu && "justify-evenly",
            )}
          >
            {s.icon}
            {s.text}
            {s.menu && <SmallCaret />}
          </button>
        ))}
      </div>
    </div>
  );
}

export default function App() {
  return (
    <div
      lang="ja"
      className={clsx(
        "flex min-h-screen flex-col overflow-hidden bg-[#383838] [font-feature-settings:'palt']",
        uiFont,
      )}
    >
      <header>
        <div className="flex bg-[#555]">
          <button
            type="button"
            aria-label="アプリケーション メニュー"
            className="flex h-[32px] w-[31px] shrink-0 items-start border-r border-b border-[#444] bg-linear-to-b from-[#999] to-[#777]"
          >
            <span className="flex w-[23px] flex-col items-center">
              <LogoA size={22} />
              <span className="text-[7px] leading-[8px] font-bold text-[#111]">LT</span>
            </span>
            <SmallCaret className="mt-[14px] text-[#333]" />
          </button>
          <div className="min-w-0 grow">
            <TitleBar />
            <RibbonTabs />
          </div>
        </div>
        <Ribbon />
        <FileTabs />
      </header>

      <main className="relative min-h-[400px] grow overflow-hidden border-r-2 border-[#a9c4e4] bg-[#212830]">
        <Drawing />
        <button type="button" aria-label="図面を閉じる" className="absolute top-[9px] right-[9px] text-white">
          <Icon w={8} h={8}>
            <path d="m1 1 6 6m0-6-6 6" strokeWidth="1.500" />
          </Icon>
        </button>
        <InsertTableDialog />
        <CommandLine />
      </main>

      <footer>
        <StatusBar />
        <div className="flex h-[3px] gap-[5px] bg-[#41613f] pl-[240px]">
          <span className="w-[46px] bg-[#6d8a6b]" />
          <span className="w-[46px] bg-[#a5b8a4]" />
        </div>
      </footer>
    </div>
  );
}
